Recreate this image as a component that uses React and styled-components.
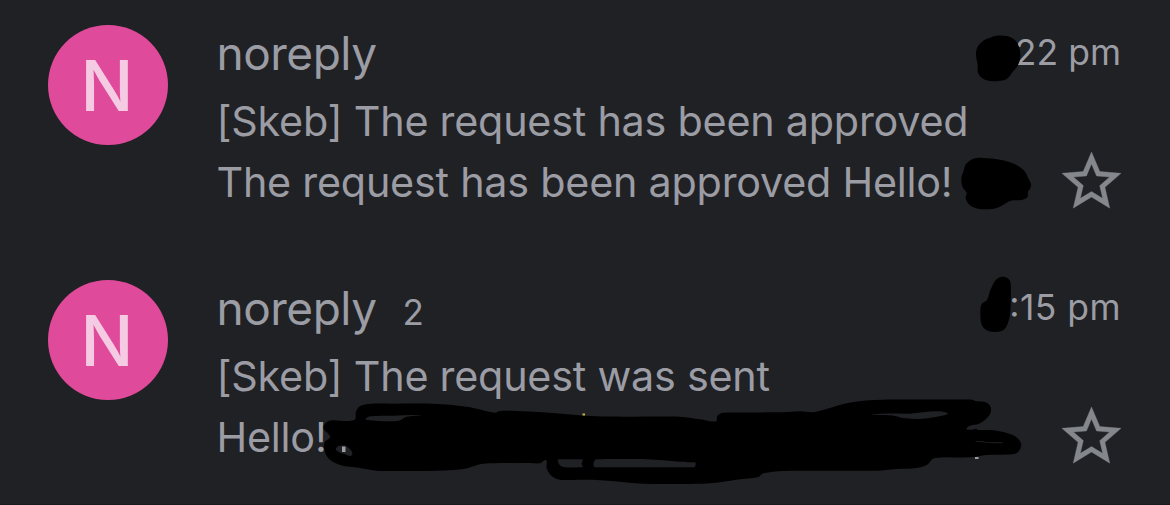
import React from "react";
import styled, { createGlobalStyle } from "styled-components";

const colors = {
  background: "#202125",
  text: "#9b9ca4",
  pink: "#e04a9b",
  pinkLight: "#f5cbe4",
  star: "#84878b",
};

const GlobalStyle = createGlobalStyle`
  * {
    box-sizing: border-box;
  }
  body {
    margin: 0;
    background: ${colors.background};
    overflow: hidden;
  }
`;

const Inbox = styled.main`
  position: relative;
  display: flex;
  flex-direction: column;
  width: 1170px;
  height: 505px;
  overflow: hidden;
  background: ${colors.background};
  color: ${colors.text};
  font-family: Inter, "Liberation Sans", sans-serif;
  border-bottom: 1px solid #17181b;
`;

const Mail = styled.article`
  display: flex;
  flex: none;
  gap: 48.5px;
  height: 255px;
  padding: 25px 43px 0 48px;
`;

const Avatar = styled.div`
  display: flex;
  flex: none;
  align-items: center;
  justify-content: center;
  width: 120px;
  height: 120px;
  border-radius: 50%;
  background: ${colors.pink};
  color: ${colors.pinkLight};
  font-size: 70px;
  font-weight: 500;
  line-height: 120px;
  padding: 1px 2px 0 0;
`;

const Content = styled.div`
  flex: 1;
  min-width: 0;
`;

const Header = styled.div`
  display: flex;
  align-items: baseline;
  height: 66px;
  line-height: 56px;
  padding-right: 6px;
`;

const Sender = styled.span`
  font-size: 46px;
  letter-spacing: -0.5px;
`;

const Count = styled.span`
  margin-left: 26px;
  font-size: 35px;
`;

const Time = styled.time`
  margin-left: auto;
  font-size: 35.5px;
  line-height: 48px;
  font-feature-settings: "case";
  letter-spacing: ${(props) => props.$spacing || "0"};
  position: relative;
  top: -5px;
`;

const Line = styled.p`
  margin: 0;
  height: 61px;
  font-size: 41.3px;
  line-height: 61px;
  letter-spacing: -0.23px;
  white-space: nowrap;
`;

const Footer = styled.div`
  display: flex;
  justify-content: space-between;
`;

const Star = styled.svg`
  flex: none;
  width: 71px;
  height: 71px;
  margin-top: -6.5px;
  fill: ${colors.star};
  stroke: ${colors.star};
  stroke-width: 0.12;
`;

const Marker = styled.svg`
  position: absolute;
  inset: 0;
  width: 1170px;
  height: 505px;
  pointer-events: none;
`;

// closed smooth curve through all the points, handles never longer
// than a third of the segment they belong to
const smooth = (pts) => {
  const n = pts.length;
  const at = (i) => pts[(i + n) % n];
  const dist = (a, b) => Math.hypot(b[0] - a[0], b[1] - a[1]);
  let d = `M${pts[0]}`;
  for (let i = 0; i < n; i++) {
    const [a, b, c, e] = [at(i - 1), at(i), at(i + 1), at(i + 2)];
    const len = dist(b, c) / 3;
    const k1 = Math.min(len, dist(a, b)) / (dist(a, c) || 1);
    const k2 = Math.min(len, dist(c, e)) / (dist(b, e) || 1);
    const c1 = [b[0] + (c[0] - a[0]) * k1, b[1] + (c[1] - a[1]) * k1];
    const c2 = [c[0] - (e[0] - b[0]) * k2, c[1] - (e[1] - b[1]) * k2];
    d += `C${c1} ${c2} ${c}`;
  }
  return d + "Z";
};

const scribbles = [
  {
    origin: "940 10",
    shapes: [
      [[108,135],[112,112],[130,92],[150,83],[170,77],[200,78],[222,88],[236,108],[241,140],[234,165],[218,186],[200,207],[175,213],[145,212],[125,203],[114,188],[113,165]],
      [[64,505],[70,485],[78,462],[100,446],[130,444],[180,449],[225,463],[255,485],[264,503],[273,522],[270,537],[264,545],[262,562],[245,570],[210,573],[180,590],[155,597],[115,596],[88,584],[77,565],[80,548],[68,532]],
    ],
  },
  {
    origin: "940 260",
    shapes: [
      [[122,140],[128,129],[141,120],[150,93],[163,66],[175,54],[190,50],[205,56],[212,70],[212,140],[208,175],[197,203],[182,214],[162,216],[140,211],[127,198],[122,180]],
    ],
  },
  {
    origin: "310 380",
    shapes: [
      [[40,145],[48,128],[65,121],[133,120],[138,95],[150,79],[175,72],[250,71],[370,71],[470,80],[553,98],[570,93],[620,93],[720,98],[860,109],[1110,110],[1170,118],[1218,124],[1222,108],[1240,98],[1420,97],[1470,94],[1515,96],[1600,72],[1660,62],[1720,59],[1985,59],[2000,64],[2030,68],[2043,85],[2037,107],[2010,130],[1970,145],[2000,147],[2003,150],[2060,152],[2110,166],[2133,190],[2125,215],[2105,223],[2030,225],[1980,232],[1875,234],[1850,255],[1820,264],[1760,267],[1700,272],[1420,273],[1360,280],[1345,291],[1280,299],[1200,310],[1110,312],[1000,311],[860,300],[750,299],[725,288],[710,265],[708,241],[690,250],[520,251],[460,267],[380,272],[200,272],[150,264],[90,255],[55,235],[42,205],[45,185],[60,170]],
      [[168,119],[180,109],[250,107],[330,106],[290,110],[262,123]],
      [[1690,103],[1800,101],[1910,98],[1850,115],[1788,115],[1750,107]],
      [[78,205],[90,197],[112,200],[126,225],[100,221],[83,214]],
      [[743,240],[747,238],[814,238],[818,240],[815,250],[818,261],[814,262],[765,262],[750,256]],
      [[855,240],[860,238],[1010,238],[1110,245],[1154,247],[1157,250],[1155,260],[1150,262],[1000,262],[856,262],[851,258],[851,250]],
      [[1998,183],[2040,187],[2080,189],[2030,188]],
    ],
  },
];

const mails = [
  {
    sender: "noreply",
    time: ":22 pm",
    subject: "[Skeb] The request has been approved",
    preview: "The request has been approved Hello!",
  },
  {
    sender: "noreply",
    count: 2,
    time: ":15 pm",
    timeSpacing: "0.45px",
    subject: "[Skeb] The request was sent",
    preview: "Hello!",
  },
];

const StarIcon = () => (
  <Star viewBox="0 0 24 24">
    <path d="M22 9.24l-7.19-.62L12 2 9.19 8.63 2 9.24l5.46 4.73L5.82 21 12 17.27 18.18 21l-1.63-7.03L22 9.24zM12 15.4l-3.76 2.27 1-4.28-3.32-2.88 4.38-.38L12 6.1l1.71 4.04 4.38.38-3.32 2.88 1 4.28L12 15.4z" />
  </Star>
);

const App = () => {
  return (
    <>
      <GlobalStyle />
      <Inbox>
        {mails.map((mail) => (
          <Mail key={mail.time}>
            <Avatar>N</Avatar>
            <Content>
              <Header>
                <Sender>{mail.sender}</Sender>
                {mail.count && <Count>{mail.count}</Count>}
                <Time $spacing={mail.timeSpacing}>{mail.time}</Time>
              </Header>
              <Line>{mail.subject}</Line>
              <Footer>
                <Line>{mail.preview}</Line>
                <StarIcon />
              </Footer>
            </Content>
          </Mail>
        ))}
        <Marker viewBox="0 0 1170 505">
          {scribbles.map(({ origin, shapes }) => (
            <path
              key={origin}
              transform={`translate(${origin}) scale(0.33333)`}
              fillRule="evenodd"
              d={shapes.map(smooth).join("")}
            />
          ))}
          {/* bits of the line left uncovered */}
          <rect x="342" y="446.5" width="3.5" height="5.5" fill={colors.text} />
          <rect x="975" y="457" width="3.5" height="2" fill={colors.text} />
          <rect x="582.5" y="413.5" width="2.5" height="2" fill="#c9b44a" />
        </Marker>
      </Inbox>
    </>
  );
};

export default App;
